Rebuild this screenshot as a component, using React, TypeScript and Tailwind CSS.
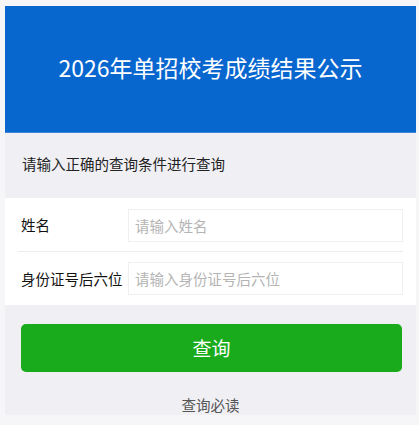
export default function App() {
  const font = { fontFamily: '"Noto Sans CJK SC", "Noto Sans", sans-serif' };
  return (
    <div className="w-[419px] h-[425px] bg-[#f6f6f8] pt-[6px] pl-[5px] pr-[3px] overflow-hidden" style={font}>
      <div className="h-[409px] bg-[#efeff4] flex flex-col">
        <div className="h-[127px] bg-[#0866cf] flex items-center justify-center border-b border-[#3d86d8]">
          <h1 className="text-white text-[23px] leading-none -mt-[4px]">
            2026年单招校考成绩结果公示
          </h1>
        </div>
        <div className="h-[65px] flex items-center pl-[17px]">
          <p className="text-[14.5px] text-[#222] leading-none -mt-[2px]">请输入正确的查询条件进行查询</p>
        </div>
        <div className="bg-white flex flex-col">
          <div className="h-[54px] flex items-center pl-[16px] pr-[13px] relative">
            <span className="w-[107px] text-[14.5px] text-[#111]">姓名</span>
            <input
              className="flex-1 h-[33px] border border-[#f0f0f0] px-[6px] text-[14.5px] outline-none placeholder:text-[#b4b4b4]"
              placeholder="请输入姓名"
            />
            <div className="absolute bottom-0 left-[13px] right-[13px] h-px bg-[#ececec]" />
          </div>
          <div className="h-[53px] flex items-center pl-[16px] pr-[13px]">
            <span className="w-[107px] text-[14.5px] text-[#111]">身份证号后六位</span>
            <input
              className="flex-1 h-[33px] border border-[#f0f0f0] px-[6px] text-[14.5px] outline-none placeholder:text-[#b4b4b4]"
              placeholder="请输入身份证号后六位"
            />
          </div>
        </div>
        <div className="pt-[19px] pl-[16px] pr-[14px]">
          <button className="w-full h-[48px] rounded-[5px] bg-[#1aab1d] text-white text-[19px]">查询</button>
        </div>
        <div className="flex-1 flex items-end justify-center">
          <span className="text-[14.5px] text-[#555] leading-none mb-[3px]">查询必读</span>
        </div>
      </div>
    </div>
  );
}
